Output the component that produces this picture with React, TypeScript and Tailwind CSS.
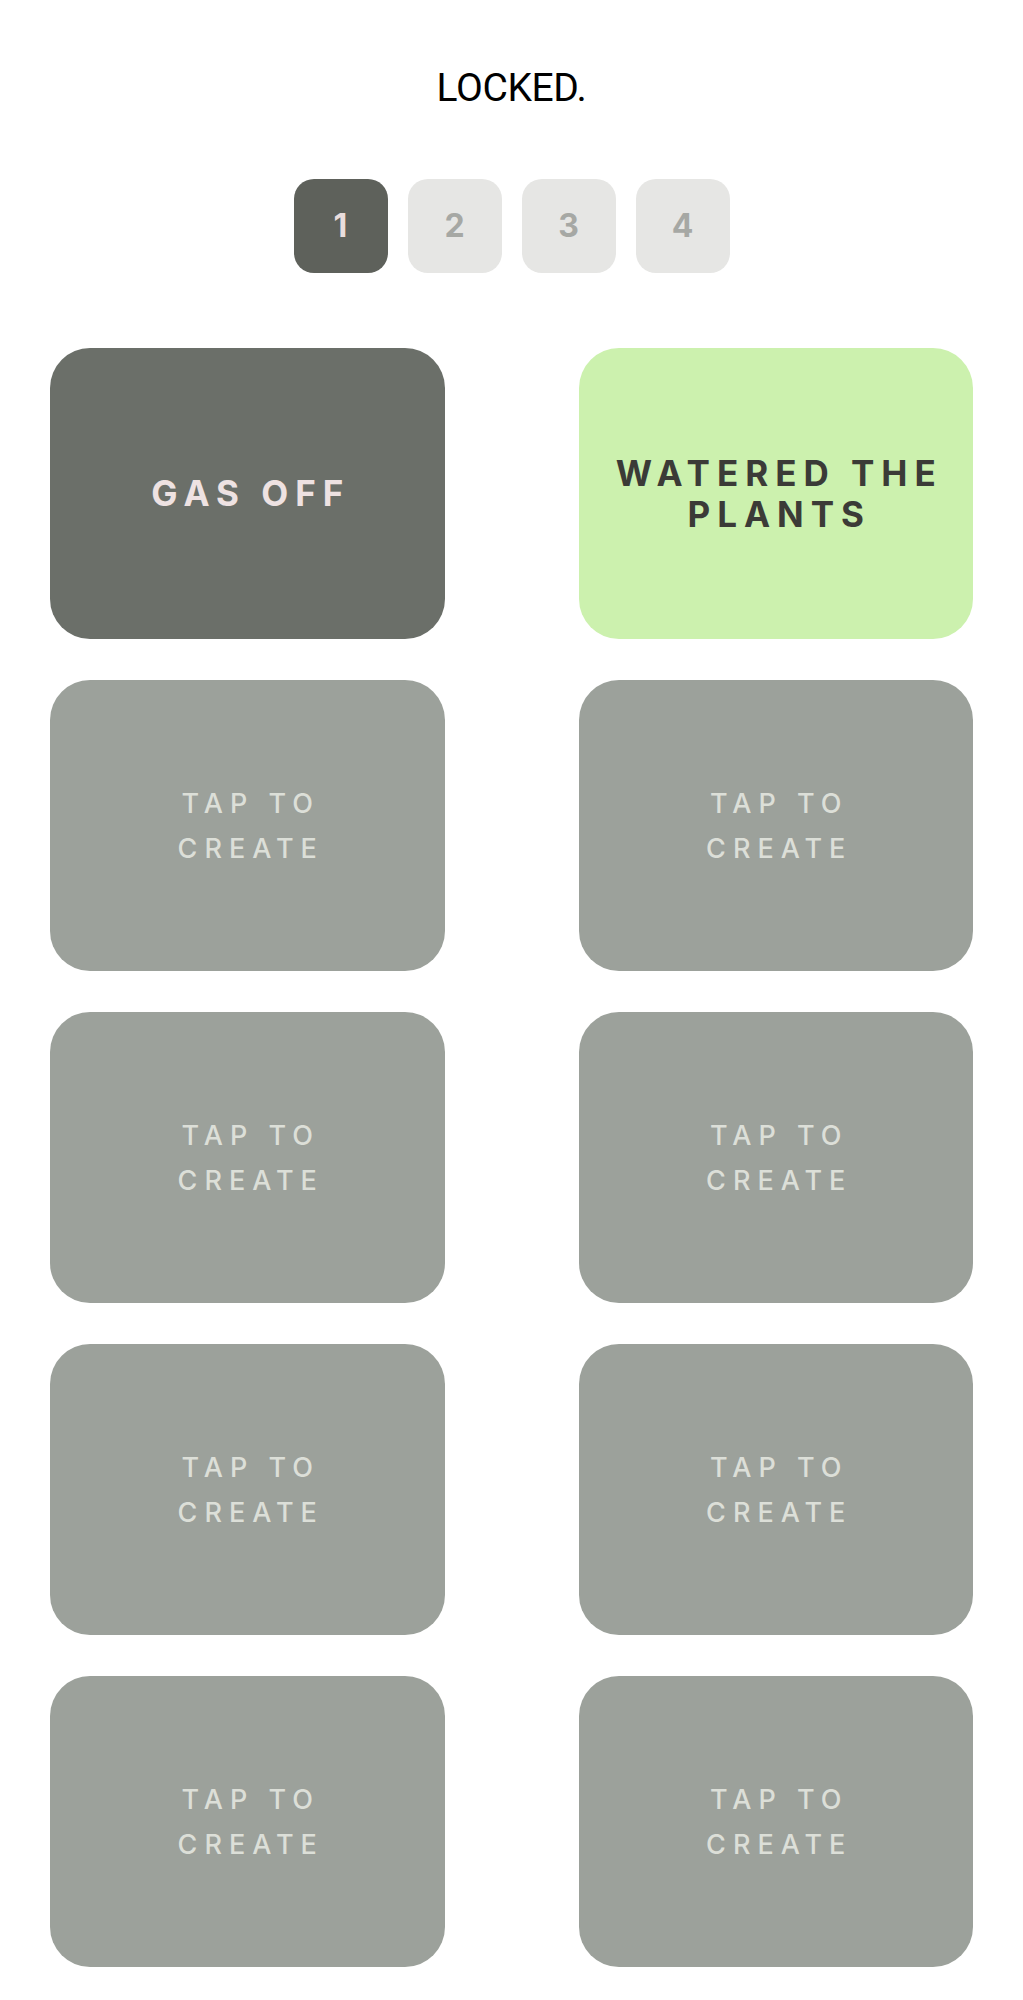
import { useState } from 'react'
import { clsx } from 'clsx'

type Tile = {
  id: number
  label?: string
  tone: 'dark' | 'green' | 'empty'
}

const tiles: Tile[] = [
  { id: 1, label: 'GAS OFF', tone: 'dark' },
  { id: 2, label: 'WATERED THE PLANTS', tone: 'green' },
  ...Array.from({ length: 8 }, (_, i) => ({ id: i + 3, tone: 'empty' as const })),
]

const font = "font-['Inter','Open_Sans',sans-serif]"

export default function App() {
  const [page, setPage] = useState(1)

  return (
    <div className="min-h-[2000px] bg-white pt-[68px]">
      <h1 className="text-center font-['Roboto','Liberation_Sans',sans-serif] text-[39px] leading-[40px] tracking-[-0.4px] text-black">
        LOCKED.
      </h1>

      <div className="mt-[71px] flex justify-center gap-5">
        {[1, 2, 3, 4].map((n) => (
          <button
            key={n}
            onClick={() => setPage(n)}
            className={clsx(
              font,
              'flex h-[94px] w-[94px] items-center justify-center rounded-[20px] text-[32px] font-bold',
              page === n ? 'bg-[#5e615b] text-[#e9dddd]' : 'bg-[#e6e6e4] text-[#a6a8a4]'
            )}
          >
            {n}
          </button>
        ))}
      </div>

      <div className="mt-[75px] grid grid-cols-2 gap-x-[134px] gap-y-[41px] px-[50px]">
        {tiles.map((t) => (
          <button
            key={t.id}
            className={clsx(
              font,
              'flex h-[291px] items-center justify-center rounded-[40px] px-[28px] text-center',
              t.tone === 'dark' && 'bg-[#6b6f69] text-[#eee2e2]',
              t.tone === 'green' && 'bg-[#ccf1ae] text-[#3b3b37]',
              t.tone === 'empty' && 'bg-[#9ca19b] text-[#dcdfd8]'
            )}
          >
            {t.label ? (
              <span className="pl-[7px] text-[35px] font-bold leading-[41px] tracking-[7px]">{t.label}</span>
            ) : (
              <span className="pl-[7px] text-[27px] font-medium leading-[45px] tracking-[7px]">
                TAP TO
                <br />
                CREATE
              </span>
            )}
          </button>
        ))}
      </div>
    </div>
  )
}
